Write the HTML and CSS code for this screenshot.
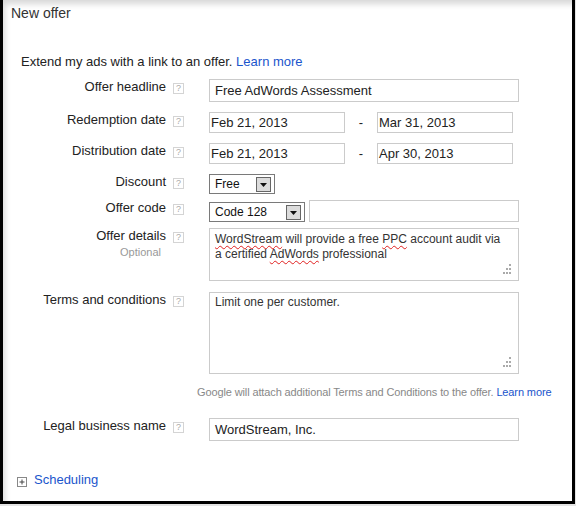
FILE: index.html
```html
<!DOCTYPE html>
<html>
<head>
<meta charset="utf-8">
<link rel="stylesheet" href="styles.css">
</head>
<body>
<div class="frame">
  <div class="title">New offer</div>
  <div class="intro">Extend my ads with a link to an offer. <a class="link">Learn more</a></div>

  <div class="form">
    <div class="row">
      <div class="label-col"><div class="label">Offer headline</div></div>
      <span class="help">?</span>
      <div class="field inp wide tall">Free AdWords Assessment</div>
    </div>

    <div class="row gap10">
      <div class="label-col"><div class="label">Redemption date</div></div>
      <span class="help">?</span>
      <div class="field inp date">Feb 21, 2013</div>
      <span class="dash">-</span>
      <div class="field inp date">Mar 31, 2013</div>
    </div>

    <div class="row gap10">
      <div class="label-col"><div class="label">Distribution date</div></div>
      <span class="help">?</span>
      <div class="field inp date">Feb 21, 2013</div>
      <span class="dash">-</span>
      <div class="field inp date">Apr 30, 2013</div>
    </div>

    <div class="row gap10">
      <div class="label-col"><div class="label">Discount</div></div>
      <span class="help">?</span>
      <div class="select discount"><span class="sel-text">Free</span><span class="sel-btn"><svg width="7" height="4" viewBox="0 0 7 4"><path d="M0 0H7L3.5 4Z" fill="#111"/></svg></span></div>
    </div>

    <div class="row gap6">
      <div class="label-col"><div class="label">Offer code</div></div>
      <span class="help">?</span>
      <div class="select code"><span class="sel-text">Code 128</span><span class="sel-btn"><svg width="7" height="4" viewBox="0 0 7 4"><path d="M0 0H7L3.5 4Z" fill="#111"/></svg></span></div>
      <div class="field inp codeval"></div>
    </div>

    <div class="row gap6">
      <div class="label-col">
        <div class="label">Offer details</div>
        <div class="optional">Optional</div>
      </div>
      <span class="help">?</span>
      <div class="field area details">
        <div class="line"><span class="sp">WordStream</span><span> will provide a free </span><span class="sp">PPC</span><span> account audit via</span></div>
        <div class="line"><span>a certified </span><span class="sp">AdWords</span><span> professional</span></div>
        <svg class="grip" width="10" height="10" viewBox="0 0 10 10"><g fill="#aaa"><rect x="8" y="0" width="2" height="2"/><rect x="5" y="4" width="2" height="2"/><rect x="8" y="4" width="2" height="2"/><rect x="2" y="8" width="2" height="2"/><rect x="5" y="8" width="2" height="2"/><rect x="8" y="8" width="2" height="2"/></g></svg>
      </div>
    </div>

    <div class="row gap11">
      <div class="label-col"><div class="label">Terms and conditions</div></div>
      <span class="help">?</span>
      <div class="field area terms">
        <div class="line">Limit one per customer.</div>
        <svg class="grip" width="10" height="10" viewBox="0 0 10 10"><g fill="#aaa"><rect x="8" y="0" width="2" height="2"/><rect x="5" y="4" width="2" height="2"/><rect x="8" y="4" width="2" height="2"/><rect x="2" y="8" width="2" height="2"/><rect x="5" y="8" width="2" height="2"/><rect x="8" y="8" width="2" height="2"/></g></svg>
      </div>
    </div>

    <div class="note">Google will attach additional Terms and Conditions to the offer. <a class="link">Learn more</a></div>

    <div class="row legal">
      <div class="label-col"><div class="label">Legal business name</div></div>
      <span class="help">?</span>
      <div class="field inp wide tall">WordStream, Inc.</div>
    </div>
  </div>

  <div class="sched">
    <span class="plus"><svg width="10" height="10" viewBox="0 0 10 10"><rect x="0.5" y="0.5" width="9" height="9" fill="#fff" stroke="#888"/><path d="M2.5 5H7.5M5 2.5V7.5" stroke="#444" stroke-width="1"/></svg></span>
    <a class="link">Scheduling</a>
  </div>
</div>
</body>
</html>
```

FILE: styles.css
```css
html, body {
  margin: 0;
  padding: 0;
}
body {
  background: #e4e4e4;
  width: 576px;
  height: 506px;
  overflow: hidden;
  font-family: "Liberation Sans", Arial, sans-serif;
  font-size: 13px;
  color: #222;
}
.frame {
  width: 569px;
  height: 501px;
  border: 3px solid #000;
  border-top: 0;
  background: #fff;
  box-shadow: inset 5px 7px 6px -3px rgba(0, 0, 0, 0.16);
  display: flex;
  flex-direction: column;
}
.title {
  font-size: 14px;
  line-height: 17px;
  color: #333;
  padding: 5px 0 0 8px;
}
.intro {
  line-height: 16px;
  margin: 32px 0 0 18px;
}
.link {
  color: #1a55cc;
  text-decoration: none;
}
.form {
  display: flex;
  flex-direction: column;
  margin-top: 9px;
}
.row {
  display: flex;
  align-items: flex-start;
}
.gap10 { margin-top: 10px; }
.gap6 { margin-top: 6px; }
.gap11 { margin-top: 11px; }
.legal { margin-top: 19px; }
.label-col {
  width: 163px;
  text-align: right;
  flex: none;
}
.label {
  line-height: 16px;
}
.optional {
  font-size: 11px;
  line-height: 13px;
  color: #999;
  padding-right: 5px;
  margin-top: 2px;
}
.help {
  flex: none;
  width: 11px;
  height: 11px;
  box-sizing: border-box;
  border: 1px solid #d4d4d4;
  margin: 4px 25px 0 7px;
  font-size: 9px;
  line-height: 9px;
  text-align: center;
  color: #aaa;
}
.field {
  box-sizing: border-box;
  border: 1px solid #cbcbcb;
  background: #fff;
  color: #222;
  flex: none;
}
.inp {
  height: 21px;
  line-height: 19px;
  padding-left: 5px;
}
.wide { width: 310px; }
.tall { height: 23px; line-height: 21px; }
.date {
  width: 136px;
  padding-left: 1px;
}
.dash {
  width: 32px;
  text-align: center;
  line-height: 21px;
  flex: none;
}
.codeval {
  width: 210px;
  height: 22px;
  margin-left: 4px;
}
.select {
  box-sizing: border-box;
  height: 20px;
  border: 1px solid #7a7a7a;
  display: flex;
  align-items: center;
  justify-content: space-between;
  padding: 0 3px 0 5px;
  flex: none;
  font-size: 12px;
  color: #111;
}
.discount { width: 66px; }
.code { width: 96px; margin-top: 2px; }
.sel-btn {
  box-sizing: border-box;
  width: 15px;
  height: 15px;
  border: 1px solid #666;
  background: #dcdcdc;
  display: flex;
  align-items: center;
  justify-content: center;
  padding-top: 1px;
}
.area {
  position: relative;
  width: 310px;
  padding: 3px 4px 3px 5px;
  font-size: 12px;
  line-height: 15px;
  color: #333;
}
.line {
  white-space: nowrap;
}
.details { height: 53px; }
.terms { height: 82px; padding-top: 2px; }
.sp {
  text-decoration: underline wavy #e02020;
  text-decoration-thickness: 1px;
  text-underline-offset: 2px;
}
.grip {
  position: absolute;
  right: 7px;
  bottom: 6px;
}
.note {
  font-size: 11px;
  line-height: 13px;
  letter-spacing: -0.12px;
  color: #888;
  margin: 12px 0 0 194px;
}
.sched {
  display: flex;
  align-items: center;
  margin: 31px 0 0 14px;
  line-height: 16px;
}
.plus {
  width: 10px;
  height: 10px;
  margin: 3px 7px 0 0;
  display: flex;
}
```
